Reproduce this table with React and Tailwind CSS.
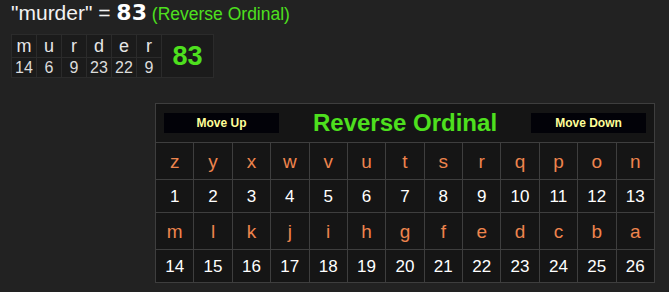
import React from "react";

const word = [["m", 14], ["u", 6], ["r", 9], ["d", 23], ["e", 22], ["r", 9]];
const letters = "zyxwvutsrqponmlkjihgfedcba".split("");

export default function App() {
  const rows = [letters.slice(0, 13), letters.slice(13)];
  return (
    <div className="min-h-screen w-full bg-[#222222] text-white" style={{ fontFamily: "Arial, 'Liberation Sans', sans-serif" }}>
      <div className="pl-[11px] pt-[2px] h-[34px] flex items-baseline whitespace-nowrap leading-none">
        <span className="text-[21px] text-[#f2f2f2] whitespace-pre">"murder" = </span>
        <span className="text-[22px] font-bold text-white whitespace-pre" style={{ fontFamily: "'DejaVu Sans', sans-serif" }}>83</span>
        <span className="text-[17.5px] text-[#4ee01e] whitespace-pre"> (Reverse Ordinal)</span>
      </div>
      <table className="ml-[11px] border-collapse bg-[#1b1b1b]">
        <tbody>
          <tr className="h-[23px]">
            {word.map(([l], i) => (
              <td key={i} className="w-[25px] p-0 border border-[#2b2b2b] text-center text-[18px] leading-none text-[#e6e6e6]">{l}</td>
            ))}
            <td rowSpan={2} className="w-[52px] p-0 border border-[#2b2b2b] text-center text-[27px] font-bold text-[#4ee01e]">83</td>
          </tr>
          <tr className="h-[20px]">
            {word.map(([, n], i) => (
              <td key={i} className="p-0 border border-[#2b2b2b] text-center text-[16px] leading-none text-[#dcdcdc]">{n}</td>
            ))}
          </tr>
        </tbody>
      </table>
      <table className="ml-[155px] mt-[25px] w-[500px] border-collapse bg-[#151515] table-fixed">
        <tbody>
          <tr className="h-[39px]">
            <td colSpan={13} className="p-0 border border-[#3e3e3e]">
              <div className="flex items-center justify-between px-[8px]">
                <div className="w-[115px] h-[20px] bg-[#020208] text-[#ffff99] text-[12px] font-bold flex items-center justify-center">Move Up</div>
                <div className="text-[24px] font-bold text-[#4ee01e] leading-none">Reverse Ordinal</div>
                <div className="w-[115px] h-[20px] bg-[#020208] text-[#ffff99] text-[12px] font-bold flex items-center justify-center">Move Down</div>
              </div>
            </td>
          </tr>
          {rows.map((r, ri) => (
            <React.Fragment key={ri}>
              <tr className="h-[37px]">
                {r.map((l) => (
                  <td key={l} className="p-0 border border-[#3e3e3e] text-center text-[19px] text-[#ee844d] leading-none">{l}</td>
                ))}
              </tr>
              <tr className="h-[33px]">
                {r.map((l, i) => (
                  <td key={l} className="p-0 border border-[#3e3e3e] text-center text-[17px] text-white leading-none">{ri * 13 + i + 1}</td>
                ))}
              </tr>
            </React.Fragment>
          ))}
        </tbody>
      </table>
    </div>
  );
}
